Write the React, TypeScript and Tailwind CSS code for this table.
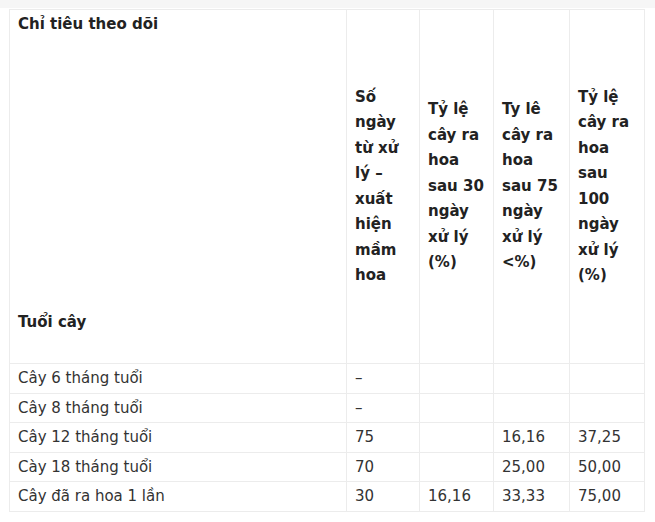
import React from 'react';

const rows: string[][] = [
  ['Cây 6 tháng tuổi', '–', '', '', ''],
  ['Cây 8 tháng tuổi', '–', '', '', ''],
  ['Cây 12 tháng tuổi', '75', '', '16,16', '37,25'],
  ['Cày 18 tháng tuổi', '70', '', '25,00', '50,00'],
  ['Cây đã ra hoa 1 lần', '30', '16,16', '33,33', '75,00'],
];

const heads: string[][] = [
  ['Số', 'ngày', 'từ xử', 'lý –', 'xuất', 'hiện', 'mầm', 'hoa'],
  ['Tỷ lệ', 'cây ra', 'hoa', 'sau 30', 'ngày', 'xử lý', '(%)'],
  ['Ty lê', 'cây ra', 'hoa', 'sau 75', 'ngày', 'xử lý', '<%)'],
  ['Tỷ lệ', 'cây ra', 'hoa', 'sau', '100', 'ngày', 'xử lý', '(%)'],
];

export default function App() {
  return (
    <div className="w-[655px] h-[522px] bg-white font-['DejaVu_Sans',sans-serif] text-[#333]">
      <div className="h-[8px] bg-[#f6f6f6]" />
      <div className="pl-[9px] pt-[1px]">
        <table className="border-collapse table-fixed w-[635px]">
          <colgroup>
            <col className="w-[337px]" />
            <col className="w-[73px]" />
            <col className="w-[74px]" />
            <col className="w-[76px]" />
            <col className="w-[75px]" />
          </colgroup>
          <thead>
            <tr className="h-[354px]">
              <th className="border border-[#ececec] p-0 align-top text-left font-bold text-[15px] text-[#222]">
                <div className="h-[352px] flex flex-col justify-between px-[8px] pt-[2px] pb-[27px] leading-[25px]">
                  <span>Chỉ tiêu theo dõi</span>
                  <span>Tuổi cây</span>
                </div>
              </th>
              {heads.map((h, i) => (
                <th
                  key={i}
                  className="border border-[#ececec] px-[8px] align-middle text-left font-bold text-[15px] text-[#222] leading-[25.5px]"
                >
                  {h.map((l, j) => (
                    <div key={j} className="whitespace-nowrap">{l}</div>
                  ))}
                </th>
              ))}
            </tr>
          </thead>
          <tbody>
            {rows.map((r, i) => (
              <tr key={i} className="h-[29.5px]">
                {r.map((c, j) => (
                  <td key={j} className="border border-[#ececec] px-[8px] py-0 text-[15px] leading-[20px] whitespace-nowrap">
                    {c}
                  </td>
                ))}
              </tr>
            ))}
          </tbody>
        </table>
      </div>
    </div>
  );
}
